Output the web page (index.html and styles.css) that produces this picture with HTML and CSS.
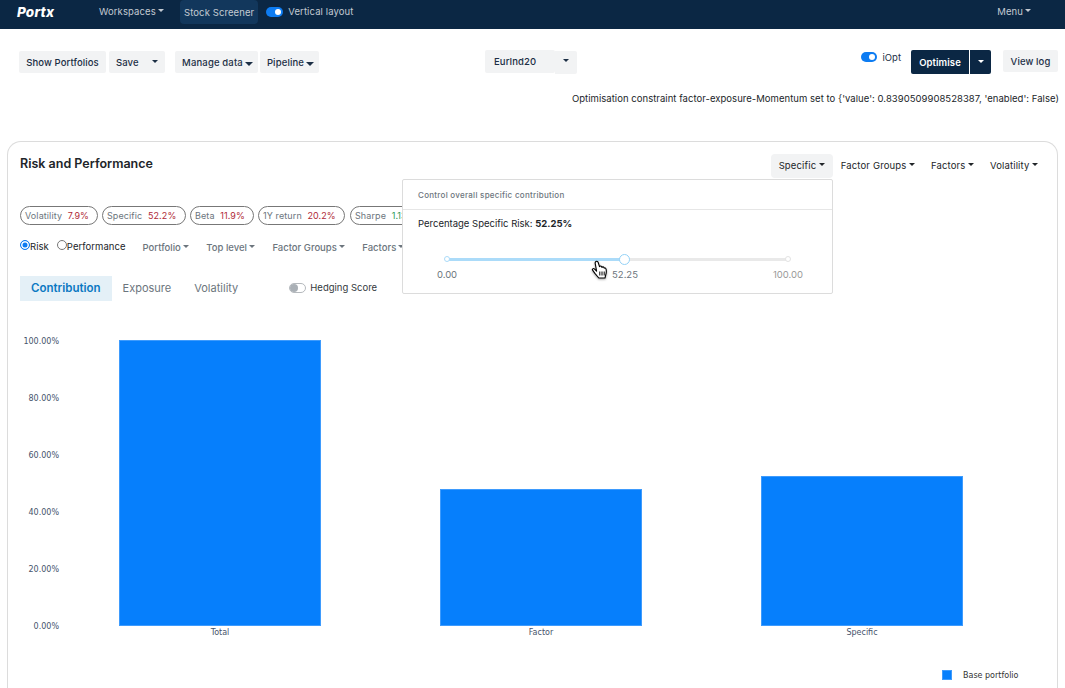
FILE: index.html
```html
<!DOCTYPE html>
<html lang="en">
<head>
<meta charset="utf-8">
<title>Portx</title>
<link rel="stylesheet" href="styles.css">
</head>
<body>
<nav class="navbar">
  <span class="brand">Portx</span>
  <span class="nav-link workspaces caret">Workspaces</span>
  <span class="nav-link active">Stock Screener</span>
  <span class="switch on nav-switch"><i></i></span>
  <span class="nav-link plain">Vertical layout</span>
  <span class="nav-link menu caret">Menu</span>
</nav>

<section class="toolbar">
  <div class="group left">
    <button class="btn show">Show Portfolios</button>
    <button class="btn save"><span>Save</span><b class="tri"></b></button>
    <button class="btn manage">Manage data<b class="tri solid"></b></button>
    <button class="btn pipeline">Pipeline<b class="tri solid"></b></button>
  </div>
  <div class="group centre">
    <button class="btn select"><span>EurInd20</span></button>
    <button class="btn select-caret"><b class="tri"></b></button>
  </div>
  <div class="group right">
    <span class="switch on iopt-switch"><i></i></span>
    <span class="iopt">iOpt</span>
    <button class="btn dark optimise">Optimise</button>
    <button class="btn dark opt-caret"><b class="tri"></b></button>
    <button class="btn log">View log</button>
  </div>
</section>

<p class="message">Optimisation constraint factor-exposure-Momentum set to {'value': 0.8390509908528387, 'enabled': False)</p>

<main class="card">
  <header class="card-head">
    <h2>Risk and Performance</h2>
    <div class="head-menus">
      <span class="head-menu open caret">Specific</span>
      <span class="head-menu caret">Factor Groups</span>
      <span class="head-menu caret">Factors</span>
      <span class="head-menu caret">Volatility</span>
    </div>
  </header>

  <div class="pills">
    <span class="pill p-vol">Volatility <em>7.9%</em></span>
    <span class="pill p-spec">Specific <em>52.2%</em></span>
    <span class="pill p-beta">Beta <em>11.9%</em></span>
    <span class="pill p-ret">1Y return <em>20.2%</em></span>
    <span class="pill p-sharpe">Sharpe <em class="good">1.13</em></span>
  </div>

  <div class="filters">
    <span class="radio checked"></span><span class="radio-label">Risk</span>
    <span class="radio second"></span><span class="radio-label">Performance</span>
    <span class="filter portfolio caret">Portfolio</span>
    <span class="filter caret">Top level</span>
    <span class="filter caret">Factor Groups</span>
    <span class="filter caret">Factors</span>
  </div>

  <div class="tabs">
    <span class="tab current">Contribution</span>
    <span class="tab">Exposure</span>
    <span class="tab">Volatility</span>
    <span class="switch off hedge-switch"><i></i></span>
    <span class="hedge">Hedging Score</span>
  </div>

  <svg class="chart" width="1050" height="382" viewBox="0 0 1050 382">
    <g class="axis-y" text-anchor="end">
      <text x="51" y="41">100.00%</text>
      <text x="51" y="98">80.00%</text>
      <text x="51" y="155">60.00%</text>
      <text x="51" y="212">40.00%</text>
      <text x="51" y="269">20.00%</text>
      <text x="51" y="326">0.00%</text>
    </g>
    <rect class="bar" x="111.500" y="37.500" width="201" height="285"/>
    <rect class="bar" x="432.500" y="186.500" width="201" height="136"/>
    <rect class="bar" x="753.500" y="173.500" width="201" height="149"/>
    <g class="axis-x" text-anchor="middle">
      <text x="212" y="332">Total</text>
      <text x="533" y="332">Factor</text>
      <text x="854" y="332">Specific</text>
    </g>
    <rect class="bar" x="934.500" y="367.500" width="9" height="9"/>
    <text class="legend" x="955" y="375">Base portfolio</text>
  </svg>

  <aside class="popover">
    <div class="pop-head">Control overall specific contribution</div>
    <div class="pop-body">
      <p class="pop-line">Percentage Specific Risk: <strong>52.25%</strong></p>
      <div class="slider">
        <div class="rail"><div class="fill"></div></div>
        <span class="dot start"></span>
        <span class="dot end"></span>
        <span class="handle"></span>
        <span class="mark m0">0.00</span>
        <span class="mark m1">52.25</span>
        <span class="mark m2">100.00</span>
      </div>
    </div>
    <svg class="cursor" width="18" height="20" viewBox="0 0 18 20">
      <path d="M5 1.500c1-.6 1.900 0 2.200 1l1.300 4.200c.2-.9 1.700-1 2.100 0l.3.700c.4-.8 1.700-.7 2.100.2l.2.600c.6-.5 1.600-.2 1.800.7.500 2 .4 4-.2 5.800l-.8 3.300H7.800L3.900 13.300 1.600 10.200c-.7-1 .7-2.200 1.700-1.300l2.300 2.200L4.200 3.400c-.2-.8.200-1.500.8-1.900z" fill="#fff" stroke="#000" stroke-width="1.100" stroke-linejoin="round"/>
      <path d="M8.800 11.500v4M11 11.500v4M13.200 11.500v4" stroke="#000" stroke-width="1" fill="none"/>
    </svg>
  </aside>
</main>
</body>
</html>
```

FILE: styles.css
```css
* { box-sizing: border-box; }
html, body { margin: 0; height: 688px; overflow: hidden; }
body { background: #fff; font-family: Inter, "Liberation Sans", sans-serif; color: #212529; }
em { font-style: normal; }
p { margin: 0; }

.caret::after {
  content: ""; display: inline-block; margin-left: 2px; vertical-align: 3px;
  border-top: 3px solid currentColor; border-left: 3.500px solid transparent; border-right: 3.500px solid transparent;
}
.tri { display: inline-block; border-top: 3px solid #1c2f45; border-left: 3.500px solid transparent; border-right: 3.500px solid transparent; }
.tri.solid { border-top-width: 4px; border-left-width: 4px; border-right-width: 4px; margin-left: 2px; vertical-align: 0; }

.navbar { display: flex; align-items: center; height: 29px; padding-bottom: 6px; background: #0b2744; font-size: 9.500px; color: #c3cad2; }
.brand { margin-left: 17px; width: 82px; font-size: 13.500px; font-weight: 800; font-style: italic; color: #fff; letter-spacing: .2px; }
.nav-link { letter-spacing: .1px; }
.workspaces { width: 81px; }
.active { display: flex; align-items: center; height: 24px; margin-top: 1px; padding: 0 4px; background: #12375c; border-radius: 4px; }
.nav-switch { margin: 0 5px 0 8px; }
.menu { margin-left: auto; margin-right: 34px; }

.switch { display: inline-block; position: relative; flex: none; width: 17px; height: 10px; border-radius: 5px; }
.switch i { position: absolute; top: 2px; width: 6px; height: 6px; border-radius: 50%; }
.switch.on { background: #0d7cf2; }
.switch.on i { right: 2px; background: #fff; }
.switch.off { background: #fff; border: 1px solid #b5b9bd; }
.switch.off i { left: 0; top: 0; width: 8px; height: 8px; background: #aab0b6; }

.toolbar { display: flex; align-items: flex-start; height: 50px; padding: 22px 7px 0 19px; }
.group { display: flex; }
.btn { display: block; height: 22px; padding: 0; border: 0; border-radius: 2px; background: #f2f3f4; color: #1c2f45; font: 500 9.500px Inter, "Liberation Sans", sans-serif; letter-spacing: .1px; }
.show { width: 87px; margin-right: 3px; }
.save { display: flex; align-items: center; justify-content: space-between; width: 56px; margin-right: 10px; padding: 0 7px; }
.save .tri { margin-top: -2px; }
.manage { width: 83px; margin-right: 2px; padding-left: 2px; letter-spacing: .15px; }
.pipeline { width: 59px; padding-left: 2px; letter-spacing: .15px; }
.centre { margin-left: 166px; }
.select { width: 70px; height: 23px; margin-top: -1px; padding-left: 9px; text-align: left; }
.select-caret { width: 22px; height: 23px; margin-top: 0; margin-left: 0; border-radius: 0 2px 2px 0; }
.select-caret .tri { margin-bottom: 4px; }
.right { align-items: flex-start; margin-left: auto; }
.iopt-switch { margin-top: 1px; width: 16px; }
.iopt { margin: 0 10px 0 6px; font-size: 9.500px; color: #1c2f45; line-height: 13px; }
.dark { background: #0b2744; color: #fff; height: 24px; margin-top: -1px; }
.optimise { width: 58px; font-weight: 600; border-radius: 2px 0 0 2px; }
.opt-caret { width: 21px; margin-left: 1px; border-radius: 0 2px 2px 0; }
.opt-caret .tri { border-top-color: #fff; margin-bottom: 3px; }
.log { width: 55px; margin-left: 12px; margin-top: -1px; }

.message { height: 62px; padding: 13px 6px 0 0; text-align: right; font-size: 9.500px; line-height: 13px; color: #212529; letter-spacing: .04px; }

.card { position: relative; height: 547px; margin: 0 7px; border: 1px solid #dcdcdc; border-bottom: 0; border-radius: 14px 14px 0 0; }
.card-head { display: flex; justify-content: space-between; align-items: flex-start; height: 64px; padding: 12px 11px 0 12px; }
.card-head h2 { margin: 1px 0 0; font-size: 12.500px; line-height: 18px; font-weight: 600; color: #212529; }
.head-menus { display: flex; }
.head-menu { display: block; height: 24px; line-height: 24px; padding: 0 8px; font-size: 9.500px; color: #212529; border-radius: 4px; letter-spacing: .15px; }
.head-menu::after { margin-left: 2.500px; }
.head-menus .open { background: #f2f3f4; }

.pills { display: flex; gap: 4px; height: 33px; padding-left: 12px; overflow: hidden; }
.pill { display: block; height: 19px; line-height: 17px; padding: 0 4px; border: 1px solid #777; border-radius: 10px; font-size: 9px; color: #6c757d; white-space: nowrap; letter-spacing: .1px; }
.pill em { color: #b02a37; margin-left: 3px; }
.pill em.good { color: #2e9a57; }
.p-vol { width: 78px; }
.p-spec { width: 84px; }
.p-beta { width: 64px; }
.p-ret { width: 87px; }
.p-sharpe { margin-left: 1px; }

.filters { display: flex; align-items: center; height: 14px; padding-left: 12px; font-size: 9.500px; color: #212529; }
.radio { display: block; flex: none; width: 10px; height: 10px; border: 1px solid #777; border-radius: 50%; margin-top: -3px; }
.radio.checked { border: 1.500px solid #0d7cf2; background: #0d7cf2; box-shadow: inset 0 0 0 1.500px #fff; }
.radio.second { margin-left: 8px; }
.radio-label { letter-spacing: .05px; }
.filter { margin-left: 17.500px; padding-top: 2px; color: #6c757d; font-weight: 500; white-space: nowrap; }
.portfolio { margin-left: 17px; }

.tabs { display: flex; align-items: center; height: 25px; margin-top: 23px; padding-left: 12px; font-size: 11px; color: #6c757d; }
.tab { display: block; height: 25px; line-height: 25px; padding: 0 11px; }
.tab.current { background: #e4f0f7; color: #0a78c2; font-size: 11.500px; font-weight: 600; }
.tab + .tab { padding: 0 11px 0 12px; margin-left: -1px; }
.tab + .tab + .tab { margin-left: 0; }
.hedge-switch { margin-left: 40px; margin-bottom: 1px; }
.hedge { margin-left: 4px; margin-bottom: 2px; font-size: 9.500px; color: #343a40; }

.chart { display: block; margin-top: 2px; }
.chart text { font-family: "DejaVu Sans", sans-serif; font-size: 8px; fill: #46536b; }
.chart .legend { fill: #333; }
.bar { fill: #067ffc; stroke: #3e9bfd; stroke-width: 1; }

.popover { position: absolute; left: 394px; top: 37px; width: 431px; height: 115px; background: #fff; border: 1px solid #dcdcdc; border-radius: 2px; }
.pop-head { height: 30px; padding-left: 15px; line-height: 30px; font-size: 8px; font-weight: 500; color: #6c757d; border-bottom: 1px solid #e6e6e6; letter-spacing: .27px; }
.pop-body { padding: 0 15px; }
.pop-line { padding-top: 7px; font-size: 9.500px; line-height: 13px; color: #212529; }
.pop-line strong { font-weight: 700; }
.slider { position: relative; height: 40px; margin-top: 14px; }
.rail { position: absolute; left: 29px; right: 29px; top: 14px; height: 3px; background: #e9e9e9; }
.fill { width: 52.250%; height: 100%; background: #abdbf9; }
.dot { position: absolute; top: 12px; width: 6px; height: 6px; border: 1px solid #abdbf9; border-radius: 50%; background: #fff; }
.dot.start { left: 26px; }
.dot.end { left: 367px; border-color: #e3e3e3; }
.handle { position: absolute; left: 201px; top: 10px; width: 11px; height: 11px; border: 1px solid #94d2f7; border-radius: 50%; background: #fff; }
.mark { position: absolute; top: 24px; transform: translateX(-50%); font-size: 9.500px; line-height: 13px; color: #6c757d; }
.m0 { left: 29px; }
.m1 { left: 207px; }
.m2 { left: 370px; color: #999; }
.cursor { position: absolute; left: 188px; top: 80px; filter: drop-shadow(0 1px 1px rgba(0,0,0,.35)); }
```
